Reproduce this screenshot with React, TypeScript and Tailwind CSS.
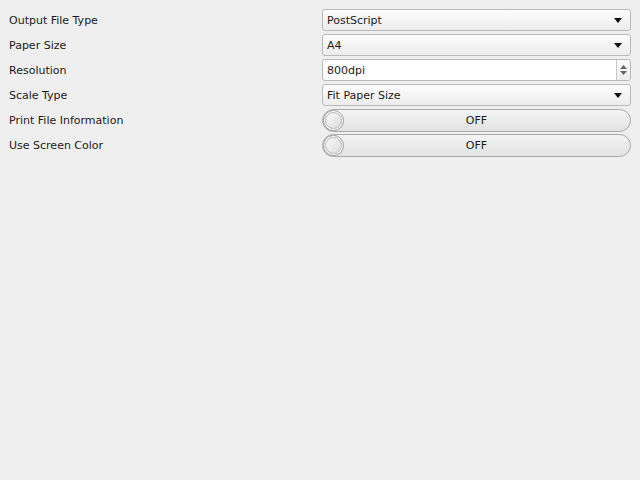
import React from "react";

const font = { fontFamily: '"DejaVu Sans", sans-serif' };

function Arrow() {
  return (
    <svg width="8" height="5" viewBox="0 0 8 5" className="mr-[8px] mt-px">
      <polygon points="0,0 8,0 4,5" fill="#111" />
    </svg>
  );
}

function Combo({ value }: { value: string }) {
  return (
    <div className="h-[22px] flex items-center justify-between rounded-[3px] border border-[#b9b9b9] bg-gradient-to-b from-[#fdfdfd] to-[#ececec] pl-[4px]">
      <span className="pt-[2px]">{value}</span>
      <Arrow />
    </div>
  );
}

function Spin({ value }: { value: string }) {
  return (
    <div className="h-[22px] flex items-stretch rounded-[3px] border border-[#b9b9b9] bg-white">
      <div className="flex-1 flex items-center pl-[4px] pt-[2px]">{value}</div>
      <div className="w-[14px] border-l border-[#c8c8c8] bg-gradient-to-b from-[#fbfbfb] to-[#ededed] flex flex-col items-center justify-center gap-[2px] rounded-r-[3px]">
        <svg width="7" height="4" viewBox="0 0 7 4"><polygon points="0,4 7,4 3.5,0" fill="#666" /></svg>
        <svg width="7" height="4" viewBox="0 0 7 4"><polygon points="0,0 7,0 3.5,4" fill="#666" /></svg>
      </div>
    </div>
  );
}

function Toggle() {
  return (
    <div className="relative h-[23px] flex items-center justify-center rounded-full border border-[#a9a9a9] bg-gradient-to-b from-[#f4f4f4] to-[#e2e2e2]">
      <div className="absolute left-[0px] top-[0px] w-[21px] h-[21px] rounded-full border border-[#9a9a9a] bg-white flex items-center justify-center">
        <div className="w-[17px] h-[17px] rounded-full border border-[#b5b5b5] bg-gradient-to-br from-[#fafafa] to-[#dcdcdc]" />
      </div>
      <span className="pt-[2px]">OFF</span>
    </div>
  );
}

export default function App() {
  const rows: [string, React.ReactNode][] = [
    ["Output File Type", <Combo value="PostScript" />],
    ["Paper Size", <Combo value="A4" />],
    ["Resolution", <Spin value="800dpi" />],
    ["Scale Type", <Combo value="Fit Paper Size" />],
    ["Print File Information", <Toggle />],
    ["Use Screen Color", <Toggle />],
  ];
  return (
    <div className="w-[640px] h-[480px] bg-[#efefef] text-[11px] text-[#1a1a1a]" style={font}>
      <div className="pt-[9px] pl-[9px] pr-[9px] flex flex-col gap-[3px]">
        {rows.map(([label, ctl], i) => (
          <div key={i} className="grid grid-cols-[313px_1fr] items-center h-[22px]">
            <span className="pt-[2px]">{label}</span>
            {ctl}
          </div>
        ))}
      </div>
    </div>
  );
}
